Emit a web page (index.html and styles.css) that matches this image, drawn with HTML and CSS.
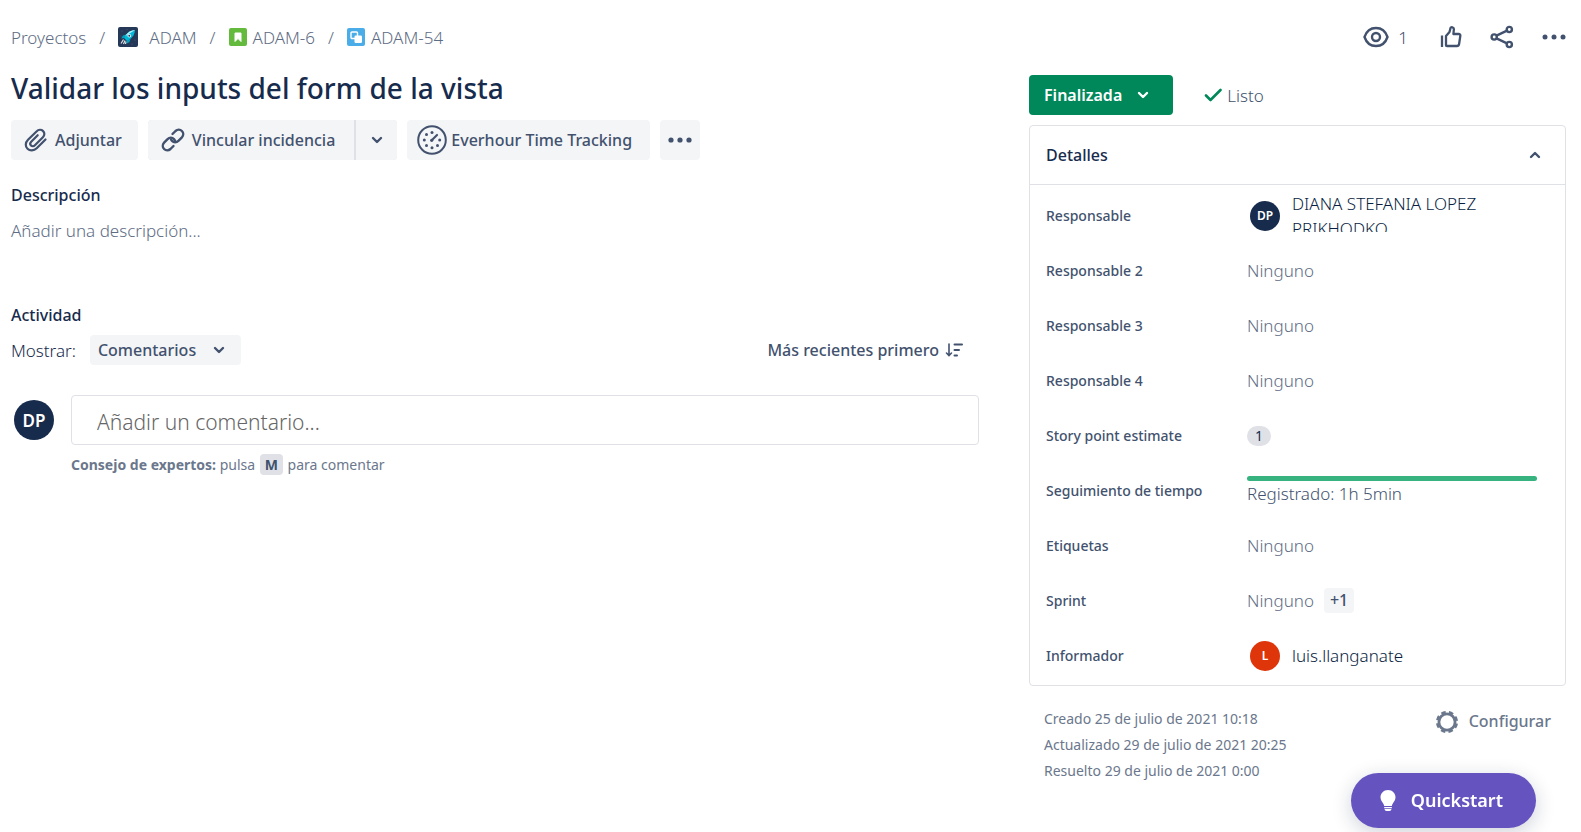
FILE: index.html
```html
<!DOCTYPE html>
<html lang="es">
<head>
<meta charset="utf-8">
<meta name="viewport" content="width=device-width, initial-scale=1">
<title>ADAM-54 - Validar los inputs del form de la vista</title>
<link rel="stylesheet" href="styles.css">
</head>
<body>
<div class="page">
  <header class="topbar">
    <nav class="crumbs" aria-label="Ruta">
      <a href="#">Proyectos</a>
      <span class="slash">/</span>
      <a href="#" class="crumb-project">
        <svg width="20" height="20" viewBox="0 0 20 20" aria-hidden="true">
          <rect width="20" height="20" rx="2" fill="#253858"/>
          <g fill="#505f79"><circle cx="4" cy="4" r=".6"/><circle cx="9" cy="2.500" r=".5"/><circle cx="3" cy="9" r=".5"/><circle cx="17" cy="13" r=".6"/><circle cx="14" cy="17" r=".6"/></g>
          <path d="M8 7.500 5 8.500 3.200 11.500l3-.4zM12.500 12l-1 3-3 1.800.4-3z" fill="#00a3bf"/>
          <path d="M17 3c-4 .2-7 2-9 4.800L6 11l3 3 3.200-2C15 10 16.800 7 17 3z" fill="#00b8d9"/>
          <path d="M17 3c-4 .2-7 2-9 4.800l-.8 1.400z" fill="#b3f5ff"/>
          <circle cx="11.300" cy="8.700" r="1.800" fill="#fff"/><circle cx="11.300" cy="8.700" r="1" fill="#253858"/>
          <path d="m5.500 12.500-2.500 4M7 13.500 5.500 17M8 14.500 7.500 17" stroke="#dfe1e6" stroke-width="1.200"/>
        </svg>
        ADAM</a>
      <span class="slash">/</span>
      <a href="#" class="crumb-issue">
        <svg width="18" height="18" viewBox="0 0 18 18" aria-hidden="true"><rect width="18" height="18" rx="2" fill="#63ba3c"/><path d="M6 5h6v8.500L9 10.500l-3 3z" fill="#fff" stroke="#fff" stroke-linejoin="round"/></svg>
        ADAM-6</a>
      <span class="slash">/</span>
      <a href="#" class="crumb-issue">
        <svg width="18" height="18" viewBox="0 0 18 18" aria-hidden="true"><rect width="18" height="18" rx="2" fill="#4bade8"/><rect x="4" y="4" width="6.500" height="6.500" rx="1" fill="none" stroke="#fff" stroke-width="1.400"/><rect x="7.500" y="7.500" width="7.500" height="7.500" rx="1.200" fill="#fff"/></svg>
        ADAM-54</a>
    </nav>
    <div class="actions">
      <button class="icon-btn watch" aria-label="Seguir">
        <svg width="26" height="22" viewBox="0 0 26 22" fill="none" stroke="#42526e" stroke-width="2.400" aria-hidden="true"><path d="M1.500 11C3.500 5 8 2 13 2s9.500 3 11.500 9c-2 6-6.500 9-11.500 9S3.500 17 1.500 11z"/><circle cx="13" cy="11" r="4"/></svg>
        <span>1</span>
      </button>
      <button class="icon-btn" aria-label="Votar">
        <svg width="22" height="22" viewBox="0 0 22 22" fill="none" stroke="#42526e" stroke-width="2.300" stroke-linejoin="round" aria-hidden="true"><path d="M2 9.500V21"/><path d="M6 19.500V10l3.500-4 1-4c.6-1.400 3.300-.9 3.400 1l-.5 5h5.200c1.200 0 1.900.9 1.700 2l-1.200 8c-.2 1.200-1 2-2.200 2H7c-.6 0-1-.1-1-.5z"/></svg>
      </button>
      <button class="icon-btn" aria-label="Compartir">
        <svg width="24" height="24" viewBox="0 0 24 24" fill="none" stroke="#42526e" stroke-width="2.400" aria-hidden="true"><circle cx="4.200" cy="12" r="2.600"/><circle cx="19.300" cy="4.500" r="2.600"/><circle cx="19.300" cy="19.500" r="2.600"/><path d="m6.500 10.700 10.500-5M6.500 13.300l10.500 5"/></svg>
      </button>
      <button class="icon-btn" aria-label="Acciones">
        <svg width="24" height="6" viewBox="0 0 24 6" fill="#42526e" aria-hidden="true"><circle cx="3" cy="3" r="2.500"/><circle cx="12" cy="3" r="2.500"/><circle cx="21" cy="3" r="2.500"/></svg>
      </button>
    </div>
  </header>

  <div class="columns">
    <main class="main">
      <h1>Validar los inputs del form de la vista</h1>
      <div class="toolbar">
        <button class="btn attach">
          <svg width="24" height="24" viewBox="0 0 24 24" fill="none" stroke="#42526e" stroke-width="2.200" stroke-linecap="round" aria-hidden="true"><path d="m21.500 11.500-8.800 8.800c-2.800 2.800-6.800 2.800-9.200.5s-2.300-6.200.5-9L12.500 3.500c2-2 4.900-2 6.600-.4s1.700 4.300-.2 6.200l-8 8c-1.200 1.200-2.900 1.200-3.900.2s-1-2.600.2-3.800l6.500-6.500"/></svg>
          Adjuntar</button>
        <div class="split">
          <button class="btn link-btn">
            <svg width="24" height="24" viewBox="0 0 24 24" fill="none" stroke="#42526e" stroke-width="2.400" stroke-linecap="round" aria-hidden="true"><path d="m11.500 6 3-3c2-1.800 4.700-1.700 6.400 0s1.800 4.400 0 6.300l-3.500 3.500c-1.900 1.900-4.600 1.900-6.400.1-.4-.4-.8-1-1-1.500"/><path d="m12.500 18-3 3c-2 1.800-4.700 1.700-6.400 0s-1.800-4.400 0-6.300l3.500-3.500c1.900-1.900 4.600-1.900 6.400-.1.400.4.800 1 1 1.500"/></svg>
            Vincular incidencia</button>
          <button class="btn more-link" aria-label="Más opciones de vínculo"><svg width="12" height="8" viewBox="0 0 12 8" fill="none" stroke="#42526e" stroke-width="2.400" stroke-linecap="round" stroke-linejoin="round" aria-hidden="true"><path d="m2 2 4 4 4-4"/></svg></button>
        </div>
        <button class="btn everhour">
          <svg width="30" height="30" viewBox="0 0 30 30" aria-hidden="true"><circle cx="15" cy="15" r="13.800" fill="none" stroke="#42526e" stroke-width="2"/><path d="m15 15 5-5" stroke="#42526e" stroke-width="2.200" stroke-linecap="round"/><g fill="#42526e"><circle cx="15" cy="7.500" r="1.500"/><circle cx="9.500" cy="9.500" r="1.500"/><circle cx="7.300" cy="15" r="1.500"/><circle cx="9.500" cy="20.500" r="1.500"/><circle cx="15" cy="22.700" r="1.500"/><circle cx="20.500" cy="20.500" r="1.500"/><circle cx="22.700" cy="15" r="1.500"/><circle cx="14.700" cy="15.300" r="1.600"/></g></svg>
          Everhour Time Tracking</button>
        <button class="btn dots" aria-label="Más"><svg width="24" height="6" viewBox="0 0 24 6" fill="#42526e" aria-hidden="true"><circle cx="3" cy="3" r="2.600"/><circle cx="12" cy="3" r="2.600"/><circle cx="21" cy="3" r="2.600"/></svg></button>
      </div>

      <section class="description">
        <h2>Descripción</h2>
        <p>Añadir una descripción...</p>
      </section>

      <section>
        <h2>Actividad</h2>
        <div class="filter">
          <label for="show">Mostrar:</label>
          <span class="select">
            <select id="show"><option>Comentarios</option></select>
            <svg width="12" height="8" viewBox="0 0 12 8" fill="none" stroke="#42526e" stroke-width="2.400" stroke-linecap="round" stroke-linejoin="round" aria-hidden="true"><path d="m2 2 4 4 4-4"/></svg>
          </span>
          <button class="sort">Más recientes primero
            <svg width="18" height="14" viewBox="0 0 18 14" fill="none" stroke="#42526e" stroke-width="2" stroke-linecap="round" aria-hidden="true"><path d="M4 1v11M1.500 10 4 12.500 6.500 10" stroke-width="1.600"/><path d="M9.500 1.500H17M9.500 7H14M9.500 12.500H12"/></svg>
          </button>
        </div>
        <div class="comment">
          <span class="avatar avatar-lg">DP</span>
          <div class="comment-body">
            <input type="text" placeholder="Añadir un comentario..." aria-label="Añadir un comentario">
            <p class="tip"><strong>Consejo de expertos:</strong> pulsa <kbd>M</kbd> para comentar</p>
          </div>
        </div>
      </section>
    </main>

    <aside class="side">
      <div class="status-row">
        <button class="status">Finalizada
          <svg width="12" height="8" viewBox="0 0 12 8" fill="none" stroke="#fff" stroke-width="2.400" stroke-linecap="round" stroke-linejoin="round" aria-hidden="true"><path d="m2 2 4 4 4-4"/></svg>
        </button>
        <span class="resolution"><svg width="18" height="14" viewBox="0 0 18 14" fill="none" stroke="#00875a" stroke-width="2.600" stroke-linecap="round" stroke-linejoin="round" aria-hidden="true"><path d="m2 7.500 4.500 4.500L16.500 2"/></svg>Listo</span>
      </div>
      <section class="panel">
        <button class="panel-head" aria-expanded="true">Detalles
          <svg width="12" height="8" viewBox="0 0 12 8" fill="none" stroke="#42526e" stroke-width="2.400" stroke-linecap="round" stroke-linejoin="round" aria-hidden="true"><path d="m2 6 4-4 4 4"/></svg>
        </button>
        <dl class="fields">
          <div class="field"><dt>Responsable</dt><dd class="person assignee"><span class="avatar">DP</span><span class="name">DIANA STEFANIA LOPEZ PRIKHODKO</span></dd></div>
          <div class="field"><dt>Responsable 2</dt><dd>Ninguno</dd></div>
          <div class="field"><dt>Responsable 3</dt><dd>Ninguno</dd></div>
          <div class="field"><dt>Responsable 4</dt><dd>Ninguno</dd></div>
          <div class="field"><dt>Story point estimate</dt><dd><span class="badge">1</span></dd></div>
          <div class="field"><dt>Seguimiento de tiempo</dt><dd class="time"><span class="bar"></span>Registrado: 1h 5min</dd></div>
          <div class="field"><dt>Etiquetas</dt><dd>Ninguno</dd></div>
          <div class="field"><dt>Sprint</dt><dd>Ninguno <button class="plus">+1</button></dd></div>
          <div class="field"><dt>Informador</dt><dd class="person"><span class="avatar red">L</span><span class="name">luis.llanganate</span></dd></div>
        </dl>
      </section>
      <footer class="meta">
        <div class="dates">
          <p>Creado 25 de julio de 2021 10:18</p>
          <p>Actualizado 29 de julio de 2021 20:25</p>
          <p>Resuelto 29 de julio de 2021 0:00</p>
        </div>
        <button class="configure">
          <svg width="24" height="24" viewBox="0 0 24 24" fill="none" stroke="#6b778c" aria-hidden="true"><circle cx="12" cy="12" r="8.100" stroke-width="2.800"/><circle cx="12" cy="12" r="9.600" stroke-width="3" stroke-dasharray="4.400 3.140" stroke-dashoffset="-1.570"/></svg>
          Configurar</button>
      </footer>
    </aside>
  </div>
</div>
<button class="quickstart">
  <svg width="16" height="21" viewBox="0 0 16 21" fill="#fff" aria-hidden="true"><path d="M8 0C3.600 0 .5 3.300.5 7.300c0 2.500 1.300 4.200 2.400 5.700.7 1 1.100 2 1.300 3h7.600c.2-1 .6-2 1.300-3 1.100-1.500 2.400-3.200 2.400-5.700C15.500 3.300 12.400 0 8 0zM4.200 17h7.600v1.300H4.200zM4.500 19h7c-.2 1.200-1 2-2 2h-3c-1 0-1.800-.8-2-2z"/></svg>
  Quickstart</button>
</body>
</html>
```
FILE: styles.css
```css
* { box-sizing: border-box; }
body {
  margin: 0;
  background: #fff;
  color: #172b4d;
  font: 300 17px/25px "Noto Sans", "Open Sans", sans-serif;
}
h1, h2, p, dl, dd { margin: 0; }
button, input, select { font: inherit; color: inherit; }
button { display: flex; align-items: center; padding: 0; border: 0; background: none; cursor: pointer; white-space: nowrap; }
a { color: inherit; text-decoration: none; }
svg { flex: none; }

.page { padding: 17px 15px 0 11px; }
.topbar { display: flex; justify-content: space-between; align-items: center; height: 40px; }
.crumbs { display: flex; align-items: center; color: #5e6c84; }
.crumbs a { display: flex; align-items: center; }
.slash { width: 32px; text-align: center; }
.crumb-project { gap: 11px; }
.crumb-issue { gap: 6px; }
.actions { display: flex; align-items: center; gap: 28px; }
.icon-btn { color: #42526e; }
.watch { gap: 9px; margin-right: 4px; }

.columns { display: grid; grid-template-columns: minmax(0, 968fr) minmax(0, 537fr); gap: 50px; }
h1 { margin-top: 14px; font-size: 28px; line-height: 35px; font-weight: 500; }
.toolbar { display: flex; gap: 10px; margin-top: 14px; }
.btn { height: 40px; border-radius: 4px; background: #f4f5f7; color: #42526e; font-size: 16px; font-weight: 500; }
.attach { gap: 7px; padding: 0 16px 0 13px; }
.split { display: flex; gap: 2px; border-radius: 4px; background: #dfe1e6; }
.link-btn { gap: 7px; padding: 0 19px 0 13px; border-radius: 4px 0 0 4px; }
.more-link { width: 41px; justify-content: center; border-radius: 0 4px 4px 0; }
.everhour { gap: 4px; padding: 0 18px 0 10px; }
.dots { width: 40px; justify-content: center; }

h2 { font-size: 16px; line-height: 25px; font-weight: 500; }
.description { margin: 23px 0 60px; }
.description p { margin-top: 10px; color: #5e6c84; }
.filter { display: flex; align-items: center; gap: 14px; margin-top: 7px; }
.select { display: grid; align-items: center; justify-items: end; }
.select > * { grid-area: 1 / 1; }
.select select { appearance: none; width: 151px; height: 30px; padding: 0 8px; border: 0; border-radius: 4px; background: #f4f5f7; color: #42526e; font-size: 16px; font-weight: 500; }
.select svg { margin-right: 16px; pointer-events: none; }
.sort { gap: 6px; margin: 0 16px 0 auto; color: #42526e; font-size: 16px; font-weight: 500; }
.comment { display: flex; gap: 17px; margin-top: 30px; padding-left: 3px; }
.comment-body { flex: 1; }
.comment input { width: 100%; height: 50px; padding: 4px 25px 0; border: 1px solid #dfe1e6; border-radius: 4px; font-size: 21px; }
.comment input::placeholder { color: #666; }
.tip { margin-top: 7px; color: #6b778c; font-size: 14px; font-weight: 400; }
.tip kbd { margin: 0 1px; padding: 1px 5px; border-radius: 4px; background: #dfe1e6; color: #42526e; font: inherit; font-weight: 700; }

.avatar { display: grid; place-items: center; flex: none; width: 30px; height: 30px; border-radius: 50%; background: #172b4d; color: #fff; font-size: 12px; font-weight: 600; }
.avatar-lg { width: 40px; height: 40px; margin-top: 5px; font-size: 17px; }
.red { background: #de350b; }

.status-row { display: flex; gap: 31px; margin-top: 18px; }
.status { gap: 15px; height: 40px; padding: 0 24px 0 15px; border-radius: 4px; background: #00875a; color: #fff; font-size: 16px; font-weight: 600; }
.resolution { display: flex; align-items: center; gap: 5px; color: #42526e; }
.panel { margin-top: 10px; border: 1px solid #dfe1e6; border-radius: 4px; }
.panel-head { justify-content: space-between; width: 100%; height: 59px; padding: 0 24px 0 16px; border-bottom: 1px solid #dfe1e6; font-size: 16px; font-weight: 500; }
.fields { padding: 3px 28px 2px 16px; }
.field { display: grid; grid-template-columns: 201px minmax(0, 1fr); align-items: center; height: 55px; }
.field dt { color: #42526e; font-size: 14px; font-weight: 500; }
.field dd { display: flex; align-items: center; gap: 10px; color: #5e6c84; }
.field .person { gap: 12px; padding-left: 3px; color: #091e42; }
.assignee .name { height: 41px; margin-bottom: 8px; overflow: hidden; }
.badge { padding: 0 8px; border-radius: 10px; background: #dfe1e6; color: #172b4d; font-size: 14px; line-height: 20px; font-weight: 400; }
.field .time { flex-direction: column; align-items: stretch; gap: 0; color: #42526e; }
.bar { height: 5px; border-radius: 3px; background: #36b37e; }
.plus { padding: 0 6px; border-radius: 4px; background: #f4f5f7; color: #42526e; font-size: 16px; font-weight: 500; }

.meta { display: flex; justify-content: space-between; align-items: flex-start; padding: 20px 15px 0; color: #6b778c; }
.dates { display: grid; gap: 1px; font-size: 14px; font-weight: 400; }
.configure { gap: 10px; margin-top: 3px; font-size: 16px; font-weight: 500; }

.quickstart {
  position: fixed;
  right: 45px;
  bottom: 4px;
  gap: 15px;
  height: 55px;
  padding: 0 33px 0 29px;
  border-radius: 28px;
  background: #6554c0;
  color: #fff;
  font-size: 18px;
  font-weight: 600;
  box-shadow: 0 5px 20px rgba(9, 30, 66, 0.2);
}
```
